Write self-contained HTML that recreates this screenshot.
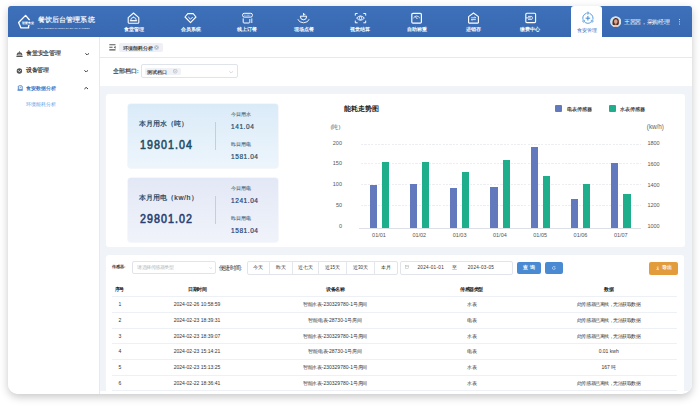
<!DOCTYPE html>
<html><head><meta charset="utf-8">
<style>
*{margin:0;padding:0;box-sizing:border-box;}
html,body{width:700px;height:406px;overflow:hidden;background:#fff;font-family:"Liberation Sans",sans-serif;}
.abs{position:absolute;}
#frame{position:absolute;left:8px;top:6px;width:684px;height:388px;border-radius:3px 3px 10px 10px;background:#fff;box-shadow:0 3px 8px rgba(0,0,0,0.22);overflow:hidden;}
#hdr{position:absolute;left:0;top:0;width:684px;height:31px;background:linear-gradient(180deg,#3d71b9,#3868b1);}
.nav{position:absolute;top:0;height:31px;width:40px;color:#fff;text-align:center;}
.nav .t{position:absolute;left:-10px;width:60px;top:19px;font-size:5px;line-height:6px;text-align:center;}
.nav svg{position:absolute;left:14px;top:6px;}
#side{position:absolute;left:0;top:31px;width:91.5px;height:357px;background:#fff;border-right:1px solid #e6eaf0;}
.mi{position:absolute;left:0;width:91px;height:14px;font-size:6px;line-height:14px;color:#222;}
#content{position:absolute;left:92px;top:31px;width:592px;height:354px;background:#f0f3f8;}
.nt{font-size:5px;line-height:6px;color:#fff;font-weight:bold;text-align:center;white-space:nowrap;}
.card{position:absolute;background:#fff;border-radius:3px;}
</style></head><body>
<div id="frame">
    <div id="hdr">
    <!-- logo -->
    <svg class="abs" style="left:8px;top:6px" width="28" height="24" viewBox="0 0 28 24">
      <path d="M13.7 8.2 L9.6 3.4 L2.6 10.5 L5 15.9 H12.6 V13.4" fill="none" stroke="#fff" stroke-width="1.35" stroke-linejoin="round"/>
      
      <rect x="5.6" y="8.6" width="13" height="4" fill="#3b6cb5"/>
      <text x="6.1" y="11.9" font-size="3.2" font-weight="bold" fill="#fff" font-family="Liberation Sans" textLength="11.7" lengthAdjust="spacingAndGlyphs">智慧食堂</text>
      <rect x="12.2" y="13" width="1.3" height="0.9" fill="#fff"/>
    </svg>
    <div class="abs" style="left:29.5px;top:8.5px;font-size:7.2px;line-height:9px;color:#fff;-webkit-text-stroke:0.15px #fff;letter-spacing:0.16px;white-space:nowrap">餐饮后台管理系统</div>
    <div class="abs" style="left:29.5px;top:20.5px;font-size:2.3px;line-height:3px;color:#e8eef8;letter-spacing:0.05px;white-space:nowrap">MANAGEMENT SYSTEM OF SMART CANTEEN</div>
    <svg class="abs" style="left:119.4px;top:6px" width="13" height="12" viewBox="0 0 13 12"><path d="M1.2 5.6 L6.5 1 L11.8 5.6 V10.6 Q11.8 11.2 11.2 11.2 H1.8 Q1.2 11.2 1.2 10.6 Z" fill="none" stroke="#fff" stroke-width="1.1" stroke-linejoin="round"/><path d="M3.6 8.6 Q3.8 5.4 6.5 5.3 Q9.2 5.4 9.4 8.6 Z" fill="none" stroke="#fff" stroke-width="0.9"/><path d="M2.8 8.8 H10.2" stroke="#fff" stroke-width="0.9"/><circle cx="6.5" cy="4.9" r="0.5" fill="#fff"/></svg>
    <div class="abs nt" style="left:105.9px;top:20.2px;width:40px">食堂管理</div>
    <svg class="abs" style="left:176.0px;top:6px" width="13" height="12" viewBox="0 0 13 12"><path d="M3.8 1.6 H9.2 L12 5 L6.5 10.6 L1 5 Z" fill="none" stroke="#fff" stroke-width="1.1" stroke-linejoin="round"/><path d="M4.3 5 L6.5 7.2 L8.7 5" fill="none" stroke="#fff" stroke-width="1"/></svg>
    <div class="abs nt" style="left:162.5px;top:20.2px;width:40px">会员系统</div>
    <svg class="abs" style="left:232.6px;top:6px" width="13" height="12" viewBox="0 0 13 12"><rect x="1.6" y="1.3" width="9.8" height="3.8" rx="1.6" fill="none" stroke="#fff" stroke-width="1"/><path d="M3.3 3.2 H9.7" stroke="#fff" stroke-width="0.7" stroke-dasharray="0.8 0.5"/><path d="M2.2 6.4 V10.3 Q2.2 11 2.9 11 H8.3" fill="none" stroke="#fff" stroke-width="1"/><path d="M8.8 7 V11 M10.8 6.4 V11" stroke="#fff" stroke-width="0.9"/></svg>
    <div class="abs nt" style="left:219.1px;top:20.2px;width:40px">线上订餐</div>
    <svg class="abs" style="left:289.2px;top:6px" width="13" height="12" viewBox="0 0 13 12"><path d="M6.5 1 V3.6 M6.5 2.3 H8.3" stroke="#fff" stroke-width="0.9" fill="none"/><path d="M3.3 4.2 H9.7 Q9.7 7.8 6.5 7.8 Q3.3 7.8 3.3 4.2 Z" fill="none" stroke="#fff" stroke-width="1"/><path d="M0.8 7.2 Q2 10.6 6.5 10.8 Q11 10.6 12.2 7.2" fill="none" stroke="#fff" stroke-width="0.9"/></svg>
    <div class="abs nt" style="left:275.7px;top:20.2px;width:40px">现场点餐</div>
    <svg class="abs" style="left:345.8px;top:6px" width="13" height="12" viewBox="0 0 13 12"><path d="M1.3 3.6 V1.5 H3.6 M9.4 1.5 H11.7 V3.6 M11.7 8.6 V10.8 H9.4 M3.6 10.8 H1.3 V8.6" fill="none" stroke="#fff" stroke-width="1"/><path d="M2.6 6.1 Q6.5 1.8 10.4 6.1 Q6.5 10.4 2.6 6.1 Z" fill="none" stroke="#fff" stroke-width="0.9"/><circle cx="6.5" cy="6.1" r="1.4" fill="none" stroke="#fff" stroke-width="0.8"/></svg>
    <div class="abs nt" style="left:332.3px;top:20.2px;width:40px">视觉结算</div>
    <svg class="abs" style="left:402.4px;top:6px" width="13" height="12" viewBox="0 0 13 12"><rect x="1.8" y="1.4" width="9.6" height="9.8" rx="1.2" fill="none" stroke="#fff" stroke-width="1.2"/><path d="M3.4 6 Q6.6 2 9.8 6" fill="none" stroke="#fff" stroke-width="0.8"/><path d="M5.2 4.6 L7.4 7" stroke="#fff" stroke-width="0.9"/></svg>
    <div class="abs nt" style="left:388.9px;top:20.2px;width:40px">自助称重</div>
    <svg class="abs" style="left:459.0px;top:6px" width="13" height="12" viewBox="0 0 13 12"><path d="M1.6 4.6 L6.5 1 L11.4 4.6 V10.5 Q11.4 11.1 10.8 11.1 H2.2 Q1.6 11.1 1.6 10.5 Z" fill="none" stroke="#fff" stroke-width="1.1" stroke-linejoin="round"/><path d="M4.2 5.8 H8.8 L7.6 4.8 M8.8 7.6 H4.2 L5.4 8.6" fill="none" stroke="#fff" stroke-width="0.8"/></svg>
    <div class="abs nt" style="left:445.5px;top:20.2px;width:40px">进销存</div>
    <svg class="abs" style="left:515.6px;top:6px" width="13" height="12" viewBox="0 0 13 12"><rect x="1.8" y="1.2" width="9.8" height="9.4" rx="1" fill="none" stroke="#fff" stroke-width="1.1"/><path d="M1.8 5.9 H6.8" stroke="#fff" stroke-width="0.9"/><path d="M4 4.4 H7.8 Q9.3 5.9 7.8 7.4 H4" fill="none" stroke="#fff" stroke-width="0.8"/></svg>
    <div class="abs nt" style="left:502.1px;top:20.2px;width:40px">缴费中心</div>
    <!-- active tab -->
    <div class="abs" style="left:562.7px;top:0;width:31.4px;height:31.5px;background:#fff;border-radius:3px 3px 0 0;"></div>
    <svg class="abs" style="left:572.5px;top:5px" width="14" height="14" viewBox="0 0 14 14">
      <circle cx="6.9" cy="7.2" r="5.1" fill="none" stroke="#3d8ad6" stroke-width="0.85"/>
      <circle cx="6.9" cy="2.1" r="1.9" fill="#fff"/><circle cx="2.7" cy="10.1" r="1.9" fill="#fff"/><circle cx="11.1" cy="10.1" r="1.9" fill="#fff"/>
      <circle cx="6.9" cy="2.1" r="1" fill="none" stroke="#3d8ad6" stroke-width="0.75"/>
      <circle cx="2.7" cy="10.1" r="1" fill="none" stroke="#3d8ad6" stroke-width="0.75"/>
      <circle cx="11.1" cy="10.1" r="1" fill="none" stroke="#3d8ad6" stroke-width="0.75"/>
      <path d="M6.9 4.9 V9.5 M4.6 7.2 H9.2" stroke="#3d8ad6" stroke-width="1"/>
    </svg>
    <div class="abs" style="left:563px;top:20.5px;width:31px;font-size:5px;line-height:6px;color:#3a78c6;text-align:center;white-space:nowrap">食安管理</div>
    <!-- user -->
    <svg class="abs" style="left:601.8px;top:9.9px" width="11.4" height="11.4" viewBox="0 0 12 12">
      <defs><clipPath id="av"><circle cx="6" cy="6" r="5.6"/></clipPath></defs>
      <circle cx="6" cy="6" r="5.8" fill="#e9eef2"/>
      <g clip-path="url(#av)">
        <circle cx="6" cy="6" r="5.6" fill="#cfe3ee"/>
        <path d="M2.6 8.8 Q2.2 3 5.6 2.2 Q9.4 2 9.4 6 Q9.6 8.6 8.4 9.6 L3.4 9.6 Z" fill="#5b2c20"/>
        <ellipse cx="6.1" cy="5.9" rx="1.9" ry="2.5" fill="#d9a58e"/>
        <path d="M3 12 Q3.6 9 6 8.9 Q8.6 9 9.2 12 Z" fill="#e8c3ae"/>
        <path d="M1.6 9.8 L3.2 11.6 L1.4 12 Z" fill="#1d1d22"/>
      </g>
    </svg>
    <div class="abs" style="left:615.8px;top:12.5px;font-size:5.7px;line-height:7px;color:#fff;letter-spacing:-0.29px;white-space:nowrap">王茜茜，采购经理</div>
    <div class="abs" style="left:670.5px;top:12.8px;width:1.4px;height:1.4px;background:#fff;border-radius:50%;box-shadow:0 2.3px 0 #fff,0 4.6px 0 #fff"></div>
  </div>

  <div id="side">
    <svg class="abs" style="left:7.7px;top:13.6px" width="7" height="7" viewBox="0 0 7 7"><path d="M0.6 4.6 Q0.6 1.2 3.5 1.2 Q6.4 1.2 6.4 4.6 Z" fill="#555"/><rect x="0.3" y="4.9" width="6.4" height="1.1" rx="0.4" fill="#555"/><path d="M1.8 3.4 H5.2" stroke="#fff" stroke-width="0.5"/><circle cx="3.5" cy="0.9" r="0.6" fill="#555"/></svg>
    <div class="abs" style="left:18.2px;top:13.3px;font-size:5.7px;line-height:7px;color:#2b2b2b;-webkit-text-stroke:0.15px #2b2b2b;letter-spacing:-0.32px;white-space:nowrap">食堂安全管理</div>
    <svg class="abs" style="left:77px;top:15.6px" width="4.4" height="2.4" viewBox="0 0 4.4 2.4"><path d="M0.4 0.4 L2.2 2 L4 0.4" fill="none" stroke="#333" stroke-width="1"/></svg>
    <svg class="abs" style="left:7.7px;top:30.5px" width="7" height="6" viewBox="0 0 7 6"><circle cx="3.4" cy="3" r="2.7" fill="#555"/><path d="M1.9 2 L3.4 3.8 L4.9 2" fill="none" stroke="#fff" stroke-width="0.7"/></svg>
    <div class="abs" style="left:18.2px;top:30.1px;font-size:5.7px;line-height:7px;color:#2b2b2b;-webkit-text-stroke:0.15px #2b2b2b;letter-spacing:-0.35px;white-space:nowrap">设备管理</div>
    <svg class="abs" style="left:76.1px;top:32.8px" width="4.4" height="2.4" viewBox="0 0 4.4 2.4"><path d="M0.4 0.4 L2.2 2 L4 0.4" fill="none" stroke="#333" stroke-width="1"/></svg>
    <svg class="abs" style="left:8.5px;top:48px" width="6" height="6" viewBox="0 0 6 6"><path d="M1.3 4.8 V1.6 Q1.3 0.8 2.1 0.8 H4.4 Q5.2 0.8 5.2 1.6 V4.8 Z" fill="none" stroke="#2f6ec2" stroke-width="0.8"/><path d="M0.4 5.2 H5.8" stroke="#2f6ec2" stroke-width="0.8"/><path d="M2.4 3.4 L3.2 2.4 L4 3.2" fill="none" stroke="#2f6ec2" stroke-width="0.6"/></svg>
    <div class="abs" style="left:18.1px;top:47.7px;font-size:5px;line-height:6px;color:#2f6ec2;-webkit-text-stroke:0.15px #2f6ec2;white-space:nowrap">食安数据分析</div>
    <svg class="abs" style="left:76.1px;top:50.2px" width="4.4" height="2.4" viewBox="0 0 4.4 2.4"><path d="M0.4 2 L2.2 0.4 L4 2" fill="none" stroke="#333" stroke-width="1"/></svg>
    <div class="abs" style="left:18.1px;top:64.1px;font-size:5px;line-height:6px;color:#5c9be2;white-space:nowrap">环境能耗分析</div>
  </div>
  <div id="content">
    <div class="abs" style="left:0;top:0;width:592px;height:20.5px;background:#fff;border-bottom:1px solid #e6e9ee;"></div>
    <div class="abs" style="left:0;top:21px;width:592px;height:28px;background:#fff;"></div>
    <svg class="abs" style="left:8.6px;top:7.2px" width="7" height="7" viewBox="0 0 7 7"><path d="M0.3 0.7 H6.5 M0.3 3.3 H3.6 M0.3 5.9 H6.5" stroke="#555" stroke-width="1.1"/><path d="M6.6 1.9 L4.6 3.3 L6.6 4.7 Z" fill="#555"/></svg>
    <div class="abs" style="left:19px;top:6.3px;width:44px;height:8.3px;background:#eef0f5;border-radius:2px"></div>
    <div class="abs" style="left:23.2px;top:7.7px;font-size:5px;line-height:6px;color:#2a2a2a;-webkit-text-stroke:0.12px #2a2a2a;white-space:nowrap">环境能耗分析</div>
    <svg class="abs" style="left:54.3px;top:8.2px" width="5" height="5" viewBox="0 0 5 5"><circle cx="2.5" cy="2.5" r="2.3" fill="#b4bccb"/><path d="M1.6 1.6 L3.4 3.4 M3.4 1.6 L1.6 3.4" stroke="#fff" stroke-width="0.6"/></svg>
    <div class="abs" style="left:13px;top:30.6px;font-size:5.7px;line-height:7px;color:#333;-webkit-text-stroke:0.15px #333;white-space:nowrap">全部档口:</div>
    <div class="abs" style="left:41.1px;top:27.3px;width:96.8px;height:14.2px;border:0.6px solid #dfe3ea;border-radius:2px;background:#fff"></div>
    <div class="abs" style="left:44.8px;top:30.8px;width:36.3px;height:7.6px;background:#f0f2f5;border-radius:1.5px"></div>
    <div class="abs" style="left:47.4px;top:31.6px;font-size:5px;line-height:6px;color:#2a2a2a;-webkit-text-stroke:0.1px #2a2a2a;white-space:nowrap">测试档口</div>
    <svg class="abs" style="left:73.2px;top:32.4px" width="4.4" height="4.4" viewBox="0 0 4.4 4.4"><circle cx="2.2" cy="2.2" r="1.9" fill="none" stroke="#a9b0bd" stroke-width="0.6"/><path d="M1.5 1.5 L2.9 2.9 M2.9 1.5 L1.5 2.9" stroke="#a9b0bd" stroke-width="0.5"/></svg>
    <svg class="abs" style="left:129px;top:33.6px" width="4.4" height="2.4" viewBox="0 0 4.4 2.4"><path d="M0.4 0.4 L2.2 2 L4 0.4" fill="none" stroke="#b8bec8" stroke-width="0.6"/></svg>
    <div class="card" style="left:6px;top:56.9px;width:579.2px;height:152.9px;"></div>
    <div class="card" style="left:5.7px;top:218px;width:578.3px;height:136px;border-radius:3px 3px 0 0"></div>
  </div>
</div>
<div id="ov" style="position:absolute;left:0;top:0;width:700px;height:406px;">
<!--OVERLAY-->
<div class="abs" style="left:127.6px;top:104px;width:150px;height:63.8px;border-radius:2.5px;background:linear-gradient(180deg,#daebf8 0%,#edf5fc 100%);box-shadow:0 0 0 0.5px rgba(200,210,230,0.35)"></div>
<div class="abs" style="left:139.3px;top:120.3px;font-size:7px;line-height:8px;color:#22405a;-webkit-text-stroke:0.2px #22405a;white-space:nowrap">本月用水（吨）</div>
<div class="abs" style="left:139.6px;top:138.2px;font-size:12.4px;line-height:14px;color:#1e4f69;-webkit-text-stroke:0.6px #1e4f69;white-space:nowrap;letter-spacing:1.25px;transform:scaleX(0.86);transform-origin:0 0">19801.04</div>
<div class="abs" style="left:214.5px;top:122px;width:1.1px;height:28px;background:#c5cfdb"></div>
<div class="abs" style="left:230.9px;top:110.9px;font-size:5px;line-height:6px;color:#4a6275;-webkit-text-stroke:0.08px #4a6275;white-space:nowrap">今日用水</div>
<div class="abs" style="left:230.9px;top:122.2px;font-size:7.4px;line-height:9px;color:#1e4f69;-webkit-text-stroke:0.22px #1e4f69;letter-spacing:0.65px;transform:scaleX(0.88);transform-origin:0 0;white-space:nowrap">141.04</div>
<div class="abs" style="left:230.9px;top:141.3px;font-size:5px;line-height:6px;color:#4a6275;-webkit-text-stroke:0.08px #4a6275;white-space:nowrap">昨日用电</div>
<div class="abs" style="left:230.9px;top:151.6px;font-size:7.4px;line-height:9px;color:#1e4f69;-webkit-text-stroke:0.22px #1e4f69;letter-spacing:0.65px;transform:scaleX(0.88);transform-origin:0 0;white-space:nowrap">1581.04</div>
<div class="abs" style="left:127.6px;top:177.9px;width:150px;height:63.8px;border-radius:2.5px;background:linear-gradient(180deg,#e3e8f6 0%,#f0f3fa 100%);box-shadow:0 0 0 0.5px rgba(200,210,230,0.35)"></div>
<div class="abs" style="left:139.3px;top:194.20000000000002px;font-size:7px;line-height:8px;color:#22405a;-webkit-text-stroke:0.2px #22405a;white-space:nowrap">本月用电（<span style="letter-spacing:0.6px">kw/h</span>）</div>
<div class="abs" style="left:139.6px;top:212.10000000000002px;font-size:12.4px;line-height:14px;color:#263f74;-webkit-text-stroke:0.6px #263f74;white-space:nowrap;letter-spacing:1.25px;transform:scaleX(0.86);transform-origin:0 0">29801.02</div>
<div class="abs" style="left:214.5px;top:195.9px;width:1.1px;height:28px;background:#c5cfdb"></div>
<div class="abs" style="left:230.9px;top:184.8px;font-size:5px;line-height:6px;color:#4a6275;-webkit-text-stroke:0.08px #4a6275;white-space:nowrap">今日用电</div>
<div class="abs" style="left:230.9px;top:196.1px;font-size:7.4px;line-height:9px;color:#263f74;-webkit-text-stroke:0.22px #263f74;letter-spacing:0.65px;transform:scaleX(0.88);transform-origin:0 0;white-space:nowrap">1241.04</div>
<div class="abs" style="left:230.9px;top:215.2px;font-size:5px;line-height:6px;color:#4a6275;-webkit-text-stroke:0.08px #4a6275;white-space:nowrap">昨日用电</div>
<div class="abs" style="left:230.9px;top:225.5px;font-size:7.4px;line-height:9px;color:#263f74;-webkit-text-stroke:0.22px #263f74;letter-spacing:0.65px;transform:scaleX(0.88);transform-origin:0 0;white-space:nowrap">1581.04</div>
<div class="abs" style="left:344px;top:104.8px;font-size:6.9px;line-height:8px;color:#222;font-weight:bold;white-space:nowrap">能耗走势图</div>
<div class="abs" style="left:555.1px;top:105.1px;width:7px;height:7px;border-radius:1px;background:#6279bd"></div>
<div class="abs" style="left:566.8px;top:105.9px;font-size:5px;line-height:6px;color:#222;-webkit-text-stroke:0.1px #222;white-space:nowrap">电表传感器</div>
<div class="abs" style="left:608.8px;top:105.1px;width:7px;height:7px;border-radius:1px;background:#1fae8c"></div>
<div class="abs" style="left:620.3px;top:105.9px;font-size:5px;line-height:6px;color:#222;-webkit-text-stroke:0.1px #222;white-space:nowrap">水表传感器</div>
<div class="abs" style="left:330.5px;top:124px;font-size:6px;line-height:7px;color:#666;white-space:nowrap">(吨)</div>
<div class="abs" style="left:646.8px;top:123.3px;font-size:6.3px;line-height:7px;color:#666;white-space:nowrap">(kw/h)</div>
<div class="abs" style="left:360.5px;top:143.8px;width:280px;height:1px;background:repeating-linear-gradient(90deg,#eceef1 0 2.2px,transparent 2.2px 3.4px)"></div>
<div class="abs" style="left:360.5px;top:163.4px;width:280px;height:1px;background:repeating-linear-gradient(90deg,#eceef1 0 2.2px,transparent 2.2px 3.4px)"></div>
<div class="abs" style="left:360.5px;top:184.0px;width:280px;height:1px;background:repeating-linear-gradient(90deg,#eceef1 0 2.2px,transparent 2.2px 3.4px)"></div>
<div class="abs" style="left:360.5px;top:204.8px;width:280px;height:1px;background:repeating-linear-gradient(90deg,#eceef1 0 2.2px,transparent 2.2px 3.4px)"></div>
<div class="abs" style="left:359px;top:227.9px;width:282px;height:0.8px;background:#dde0e6"></div>
<div class="abs" style="left:320px;top:139.7px;width:22px;text-align:right;font-size:5.5px;line-height:7px;color:#555;white-space:nowrap">200</div>
<div class="abs" style="left:320px;top:160.4px;width:22px;text-align:right;font-size:5.5px;line-height:7px;color:#555;white-space:nowrap">150</div>
<div class="abs" style="left:320px;top:181.3px;width:22px;text-align:right;font-size:5.5px;line-height:7px;color:#555;white-space:nowrap">100</div>
<div class="abs" style="left:320px;top:201.9px;width:22px;text-align:right;font-size:5.5px;line-height:7px;color:#555;white-space:nowrap">50</div>
<div class="abs" style="left:320px;top:222.8px;width:22px;text-align:right;font-size:5.5px;line-height:7px;color:#555;white-space:nowrap">0</div>
<div class="abs" style="left:647.4px;top:140.0px;font-size:5.5px;line-height:7px;color:#555;white-space:nowrap">1800</div>
<div class="abs" style="left:647.4px;top:161.0px;font-size:5.5px;line-height:7px;color:#555;white-space:nowrap">1600</div>
<div class="abs" style="left:647.4px;top:182.0px;font-size:5.5px;line-height:7px;color:#555;white-space:nowrap">1400</div>
<div class="abs" style="left:647.4px;top:201.8px;font-size:5.5px;line-height:7px;color:#555;white-space:nowrap">1200</div>
<div class="abs" style="left:647.4px;top:222.8px;font-size:5.5px;line-height:7px;color:#555;white-space:nowrap">1000</div>
<div class="abs" style="left:369.5px;top:184.5px;width:7.2px;height:43.5px;background:#6279bd"></div>
<div class="abs" style="left:381.6px;top:162px;width:7.2px;height:66.0px;background:#1fae8c"></div>
<div class="abs" style="left:359.0px;top:231.6px;width:40px;text-align:center;font-size:5.5px;line-height:7px;color:#555;white-space:nowrap">01/01</div>
<div class="abs" style="left:409.8px;top:184.3px;width:7.2px;height:43.7px;background:#6279bd"></div>
<div class="abs" style="left:421.9px;top:161.7px;width:7.2px;height:66.3px;background:#1fae8c"></div>
<div class="abs" style="left:399.3px;top:231.6px;width:40px;text-align:center;font-size:5.5px;line-height:7px;color:#555;white-space:nowrap">01/02</div>
<div class="abs" style="left:450.1px;top:187.8px;width:7.2px;height:40.2px;background:#6279bd"></div>
<div class="abs" style="left:462.2px;top:171.5px;width:7.2px;height:56.5px;background:#1fae8c"></div>
<div class="abs" style="left:439.6px;top:231.6px;width:40px;text-align:center;font-size:5.5px;line-height:7px;color:#555;white-space:nowrap">01/03</div>
<div class="abs" style="left:490.4px;top:187.4px;width:7.2px;height:40.6px;background:#6279bd"></div>
<div class="abs" style="left:502.5px;top:159.5px;width:7.2px;height:68.5px;background:#1fae8c"></div>
<div class="abs" style="left:479.9px;top:231.6px;width:40px;text-align:center;font-size:5.5px;line-height:7px;color:#555;white-space:nowrap">01/04</div>
<div class="abs" style="left:530.7px;top:146.5px;width:7.2px;height:81.5px;background:#6279bd"></div>
<div class="abs" style="left:542.8px;top:175.9px;width:7.2px;height:52.1px;background:#1fae8c"></div>
<div class="abs" style="left:520.2px;top:231.6px;width:40px;text-align:center;font-size:5.5px;line-height:7px;color:#555;white-space:nowrap">01/05</div>
<div class="abs" style="left:571.0px;top:199.2px;width:7.2px;height:28.8px;background:#6279bd"></div>
<div class="abs" style="left:583.1px;top:183.9px;width:7.2px;height:44.1px;background:#1fae8c"></div>
<div class="abs" style="left:560.5px;top:231.6px;width:40px;text-align:center;font-size:5.5px;line-height:7px;color:#555;white-space:nowrap">01/06</div>
<div class="abs" style="left:611.3px;top:163.3px;width:7.2px;height:64.7px;background:#6279bd"></div>
<div class="abs" style="left:623.4px;top:193.9px;width:7.2px;height:34.1px;background:#1fae8c"></div>
<div class="abs" style="left:600.8px;top:231.6px;width:40px;text-align:center;font-size:5.5px;line-height:7px;color:#555;white-space:nowrap">01/07</div>
<div class="abs" style="left:112px;top:264.4px;font-size:4.2px;line-height:6px;color:#333;font-weight:bold;white-space:nowrap">传感器:</div>
<div class="abs" style="left:132px;top:261.4px;width:83.6px;height:13px;border:0.6px solid #e1e4ea;border-radius:2px;background:#fff"></div>
<div class="abs" style="left:137px;top:265px;font-size:4.6px;line-height:6px;color:#b3b8c0;letter-spacing:-0.42px;white-space:nowrap">请选择传感器类型</div>
<svg class="abs" style="left:208.6px;top:267px" width="3.6" height="2" viewBox="0 0 3.6 2"><path d="M0.3 0.3 L1.8 1.6 L3.3 0.3" fill="none" stroke="#bcc1c8" stroke-width="0.5"/></svg>
<div class="abs" style="left:219px;top:264.5px;font-size:5.5px;line-height:7px;color:#2a2a2a;white-space:nowrap"><span style="letter-spacing:-0.6px">便捷时间</span><span style="margin-left:0px">:</span></div>
<div class="abs" style="left:247.2px;top:261.3px;width:150.6px;height:13.3px;border:0.6px solid #e1e4ea;border-radius:2px;background:#fff"></div>
<div class="abs" style="left:247.2px;top:264.9px;width:22.19999999999999px;text-align:center;font-size:4.5px;line-height:6px;color:#333;white-space:nowrap">今天</div>
<div class="abs" style="left:269.09999999999997px;top:261.6px;width:0.6px;height:12.7px;background:#e4e7ec"></div>
<div class="abs" style="left:269.4px;top:264.9px;width:22.600000000000023px;text-align:center;font-size:4.5px;line-height:6px;color:#333;white-space:nowrap">昨天</div>
<div class="abs" style="left:291.7px;top:261.6px;width:0.6px;height:12.7px;background:#e4e7ec"></div>
<div class="abs" style="left:292px;top:264.9px;width:26.5px;text-align:center;font-size:4.5px;line-height:6px;color:#333;white-space:nowrap">近七天</div>
<div class="abs" style="left:318.2px;top:261.6px;width:0.6px;height:12.7px;background:#e4e7ec"></div>
<div class="abs" style="left:318.5px;top:264.9px;width:27.899999999999977px;text-align:center;font-size:4.5px;line-height:6px;color:#333;white-space:nowrap">近15天</div>
<div class="abs" style="left:346.09999999999997px;top:261.6px;width:0.6px;height:12.7px;background:#e4e7ec"></div>
<div class="abs" style="left:346.4px;top:264.9px;width:28.100000000000023px;text-align:center;font-size:4.5px;line-height:6px;color:#333;white-space:nowrap">近30天</div>
<div class="abs" style="left:374.2px;top:261.6px;width:0.6px;height:12.7px;background:#e4e7ec"></div>
<div class="abs" style="left:374.5px;top:264.9px;width:23.30000000000001px;text-align:center;font-size:4.5px;line-height:6px;color:#333;white-space:nowrap">本月</div>
<div class="abs" style="left:400.3px;top:261.3px;width:113.1px;height:13.3px;border:0.6px solid #e1e4ea;border-radius:2px;background:#fff"></div>
<svg class="abs" style="left:404.6px;top:265.4px" width="4" height="4" viewBox="0 0 4 4"><rect x="0.4" y="0.6" width="3.2" height="3" fill="none" stroke="#aab0b8" stroke-width="0.45"/><path d="M0.4 1.5 H3.6" stroke="#aab0b8" stroke-width="0.4"/></svg>
<div class="abs" style="left:417.5px;top:264.9px;font-size:4.6px;line-height:6px;color:#333;letter-spacing:0.3px;white-space:nowrap">2024-01-01</div>
<div class="abs" style="left:452.4px;top:264.9px;font-size:4.6px;line-height:6px;color:#333;white-space:nowrap">至</div>
<div class="abs" style="left:467.7px;top:264.9px;font-size:4.6px;line-height:6px;color:#333;letter-spacing:0.3px;white-space:nowrap">2024-03-05</div>
<div class="abs" style="left:517.3px;top:262.1px;width:23.9px;height:12.4px;border-radius:2px;background:#4a8ad2"></div>
<div class="abs" style="left:517.3px;top:265.3px;width:24.9px;text-align:center;font-size:4.8px;line-height:6px;color:#fff;font-weight:bold;white-space:nowrap;letter-spacing:1.6px">查询</div>
<div class="abs" style="left:545px;top:262.1px;width:17.8px;height:12.4px;border-radius:2px;background:#4a8ad2"></div>
<svg class="abs" style="left:551.9px;top:266px" width="4" height="4" viewBox="0 0 4 4"><path d="M3.3 2 A1.4 1.4 0 1 1 2.6 0.8" fill="none" stroke="#fff" stroke-width="0.5"/><path d="M2.4 0.2 L3.3 0.9 L2.4 1.5" fill="none" stroke="#fff" stroke-width="0.45"/></svg>
<div class="abs" style="left:649.1px;top:262.1px;width:28.6px;height:12.5px;border-radius:2px;background:#e39c3b"></div>
<div class="abs" style="left:662px;top:265.2px;font-size:4.6px;line-height:6px;color:#fff;font-weight:bold;white-space:nowrap;letter-spacing:-0.3px">导出</div>
<svg class="abs" style="left:655.6px;top:265.6px" width="3.6" height="4" viewBox="0 0 3.6 4"><path d="M1.8 0.3 V2.6 M0.8 1.7 L1.8 2.7 L2.8 1.7 M0.3 3.6 H3.3" fill="none" stroke="#fff" stroke-width="0.6"/></svg>
<div class="abs" style="left:112.3px;top:296.0px;width:565px;height:0.7px;background:#edf0f4"></div>
<div class="abs" style="left:114.9px;top:285.9px;font-size:5px;line-height:6px;color:#222;font-weight:bold;letter-spacing:-0.5px;white-space:nowrap">序号</div>
<div class="abs" style="left:157.0px;top:285.9px;width:80px;text-align:center;font-size:5px;line-height:6px;color:#222;font-weight:bold;letter-spacing:-0.5px;white-space:nowrap">日期时间</div>
<div class="abs" style="left:295.0px;top:285.9px;width:80px;text-align:center;font-size:5px;line-height:6px;color:#222;font-weight:bold;letter-spacing:-0.5px;white-space:nowrap">设备名称</div>
<div class="abs" style="left:431.7px;top:285.9px;width:80px;text-align:center;font-size:5px;line-height:6px;color:#222;font-weight:bold;letter-spacing:-0.5px;white-space:nowrap">传感器类型</div>
<div class="abs" style="left:568.7px;top:285.9px;width:80px;text-align:center;font-size:5px;line-height:6px;color:#222;font-weight:bold;letter-spacing:-0.5px;white-space:nowrap">数据</div>
<div class="abs" style="left:112.3px;top:311.9px;width:565px;height:0.7px;background:#edf0f4"></div>
<div class="abs" style="left:118.6px;top:301.3px;font-size:5px;line-height:6px;color:#333;white-space:nowrap">1</div>
<div class="abs" style="left:147.0px;top:301.3px;width:100px;text-align:center;font-size:5px;line-height:6px;color:#333;white-space:nowrap">2024-02-26 10:58:59</div>
<div class="abs" style="left:285.0px;top:301.3px;width:100px;text-align:center;font-size:5px;line-height:6px;color:#333;white-space:nowrap"><span style="letter-spacing:-0.25px">智能水表</span>-230329780-1<span style="letter-spacing:-0.25px">号房间</span></div>
<div class="abs" style="left:421.7px;top:301.3px;width:100px;text-align:center;font-size:5px;line-height:6px;color:#333;white-space:nowrap"><span style="letter-spacing:-0.25px">水表</span></div>
<div class="abs" style="left:558.7px;top:301.3px;width:100px;text-align:center;font-size:5px;line-height:6px;color:#333;white-space:nowrap"><span style="letter-spacing:-0.46px">此传感器已离线，无法获取数据</span></div>
<div class="abs" style="left:112.3px;top:327.6px;width:565px;height:0.7px;background:#edf0f4"></div>
<div class="abs" style="left:118.6px;top:317.0px;font-size:5px;line-height:6px;color:#333;white-space:nowrap">2</div>
<div class="abs" style="left:147.0px;top:317.0px;width:100px;text-align:center;font-size:5px;line-height:6px;color:#333;white-space:nowrap">2024-02-23 18:39:31</div>
<div class="abs" style="left:285.0px;top:317.0px;width:100px;text-align:center;font-size:5px;line-height:6px;color:#333;white-space:nowrap"><span style="letter-spacing:-0.25px">智能电表</span>-28730-1<span style="letter-spacing:-0.25px">号房间</span></div>
<div class="abs" style="left:421.7px;top:317.0px;width:100px;text-align:center;font-size:5px;line-height:6px;color:#333;white-space:nowrap"><span style="letter-spacing:-0.25px">电表</span></div>
<div class="abs" style="left:558.7px;top:317.0px;width:100px;text-align:center;font-size:5px;line-height:6px;color:#333;white-space:nowrap"><span style="letter-spacing:-0.46px">此传感器已离线，无法获取数据</span></div>
<div class="abs" style="left:112.3px;top:343.2px;width:565px;height:0.7px;background:#edf0f4"></div>
<div class="abs" style="left:118.6px;top:332.6px;font-size:5px;line-height:6px;color:#333;white-space:nowrap">3</div>
<div class="abs" style="left:147.0px;top:332.6px;width:100px;text-align:center;font-size:5px;line-height:6px;color:#333;white-space:nowrap">2024-02-23 18:39:07</div>
<div class="abs" style="left:285.0px;top:332.6px;width:100px;text-align:center;font-size:5px;line-height:6px;color:#333;white-space:nowrap"><span style="letter-spacing:-0.25px">智能水表</span>-230329780-1<span style="letter-spacing:-0.25px">号房间</span></div>
<div class="abs" style="left:421.7px;top:332.6px;width:100px;text-align:center;font-size:5px;line-height:6px;color:#333;white-space:nowrap"><span style="letter-spacing:-0.25px">水表</span></div>
<div class="abs" style="left:558.7px;top:332.6px;width:100px;text-align:center;font-size:5px;line-height:6px;color:#333;white-space:nowrap"><span style="letter-spacing:-0.46px">此传感器已离线，无法获取数据</span></div>
<div class="abs" style="left:112.3px;top:358.9px;width:565px;height:0.7px;background:#edf0f4"></div>
<div class="abs" style="left:118.6px;top:348.3px;font-size:5px;line-height:6px;color:#333;white-space:nowrap">4</div>
<div class="abs" style="left:147.0px;top:348.3px;width:100px;text-align:center;font-size:5px;line-height:6px;color:#333;white-space:nowrap">2024-02-23 15:14:21</div>
<div class="abs" style="left:285.0px;top:348.3px;width:100px;text-align:center;font-size:5px;line-height:6px;color:#333;white-space:nowrap"><span style="letter-spacing:-0.25px">智能电表</span>-28730-1<span style="letter-spacing:-0.25px">号房间</span></div>
<div class="abs" style="left:421.7px;top:348.3px;width:100px;text-align:center;font-size:5px;line-height:6px;color:#333;white-space:nowrap"><span style="letter-spacing:-0.25px">电表</span></div>
<div class="abs" style="left:558.7px;top:348.3px;width:100px;text-align:center;font-size:5px;line-height:6px;color:#333;white-space:nowrap">0.01 kwh</div>
<div class="abs" style="left:112.3px;top:374.6px;width:565px;height:0.7px;background:#edf0f4"></div>
<div class="abs" style="left:118.6px;top:364.0px;font-size:5px;line-height:6px;color:#333;white-space:nowrap">5</div>
<div class="abs" style="left:147.0px;top:364.0px;width:100px;text-align:center;font-size:5px;line-height:6px;color:#333;white-space:nowrap">2024-02-23 15:13:25</div>
<div class="abs" style="left:285.0px;top:364.0px;width:100px;text-align:center;font-size:5px;line-height:6px;color:#333;white-space:nowrap"><span style="letter-spacing:-0.25px">智能水表</span>-230329780-1<span style="letter-spacing:-0.25px">号房间</span></div>
<div class="abs" style="left:421.7px;top:364.0px;width:100px;text-align:center;font-size:5px;line-height:6px;color:#333;white-space:nowrap"><span style="letter-spacing:-0.25px">水表</span></div>
<div class="abs" style="left:558.7px;top:364.0px;width:100px;text-align:center;font-size:5px;line-height:6px;color:#333;white-space:nowrap">167 <span style="letter-spacing:-0.25px">吨</span></div>
<div class="abs" style="left:112.3px;top:390.2px;width:565px;height:0.7px;background:#edf0f4"></div>
<div class="abs" style="left:118.6px;top:379.6px;font-size:5px;line-height:6px;color:#333;white-space:nowrap">6</div>
<div class="abs" style="left:147.0px;top:379.6px;width:100px;text-align:center;font-size:5px;line-height:6px;color:#333;white-space:nowrap">2024-02-22 18:36:41</div>
<div class="abs" style="left:285.0px;top:379.6px;width:100px;text-align:center;font-size:5px;line-height:6px;color:#333;white-space:nowrap"><span style="letter-spacing:-0.25px">智能水表</span>-230329780-1<span style="letter-spacing:-0.25px">号房间</span></div>
<div class="abs" style="left:421.7px;top:379.6px;width:100px;text-align:center;font-size:5px;line-height:6px;color:#333;white-space:nowrap"><span style="letter-spacing:-0.25px">水表</span></div>
<div class="abs" style="left:558.7px;top:379.6px;width:100px;text-align:center;font-size:5px;line-height:6px;color:#333;white-space:nowrap"><span style="letter-spacing:-0.46px">此传感器已离线，无法获取数据</span></div>
<!--/OVERLAY-->
</div>
</body></html>
